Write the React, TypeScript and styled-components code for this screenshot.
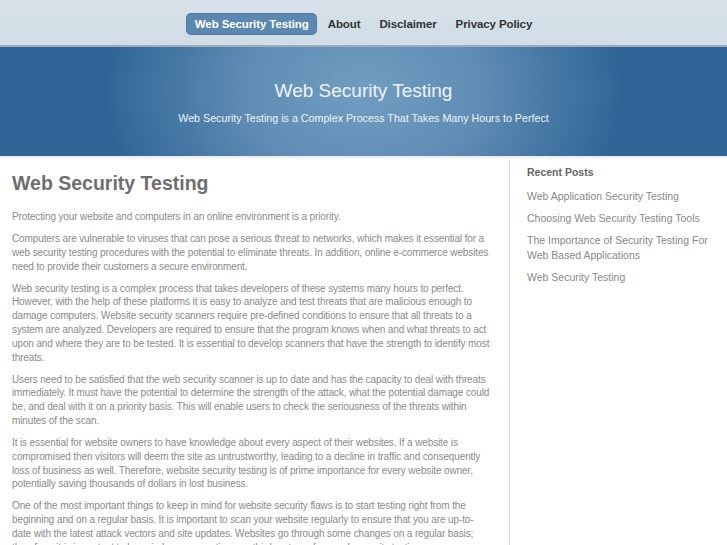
import React from "react";
import styled, { createGlobalStyle } from "styled-components";

const Global = createGlobalStyle`
  html, body { margin: 0; padding: 0; background: #ffffff; }
  body { font-family: "Liberation Sans", Arial, sans-serif; }
`;

const Page = styled.div`
  width: 727px;
  min-height: 545px;
  overflow: hidden;
`;

const NavBar = styled.nav`
  height: 45px;
  background: linear-gradient(#d7e2ea, #d1dde6);
  border-bottom: 2px solid #9eabbb;
  display: flex;
  justify-content: center;
  align-items: center;
`;

const NavList = styled.ul`
  list-style: none;
  margin: 2px 0 0 0;
  padding: 0;
  display: flex;
  align-items: center;
  gap: 4px;
`;

const NavItem = styled.li<{ $active?: boolean }>`
  font-size: 11.5px;
  font-weight: bold;
  letter-spacing: -0.1px;
  padding: 0 7.5px;
  height: 20px;
  line-height: 20px;
  border-radius: 4px;
  color: ${(p) => (p.$active ? "#ffffff" : "#333333")};
  background: ${(p) => (p.$active ? "#5b87b1" : "transparent")};
  box-shadow: ${(p) => (p.$active ? "0 0 0 1px #4f7aa3" : "none")};
`;

const Banner = styled.header`
  height: 109px;
  background:
    radial-gradient(ellipse 260px 190px at 50% 40%, rgba(114, 157, 194, 1) 0%, rgba(101, 145, 184, 0.9) 45%, rgba(47, 101, 150, 0) 100%),
    #2f6596;
  display: flex;
  flex-direction: column;
  align-items: center;
  color: #eef3f8;
`;

const BannerTitle = styled.h1`
  margin: 33px 0 0 0;
  font-size: 19px;
  font-weight: normal;
  line-height: 22px;
`;

const BannerSub = styled.p`
  margin: 9px 0 0 0;
  font-size: 10.7px;
  line-height: 14px;
`;

const Shadow = styled.div`
  height: 4px;
  background: linear-gradient(#e6e8ea, #ffffff);
`;

const Body = styled.div`
  display: flex;
`;

const Main = styled.main`
  width: 480px;
  padding: 0 17px 0 12px;
  border-right: 1px solid #d8d8d8;
`;

const Heading = styled.h2`
  margin: 11px 0 0 0;
  font-size: 19.5px;
  line-height: 24px;
  font-weight: bold;
  color: #6e6e6e;
`;

const Para = styled.p`
  margin: 8.2px 0 0 0;
  font-size: 10px;
  letter-spacing: -0.12px;
  line-height: 13.8px;
  color: #8a8a8a;
  &:first-of-type { margin-top: 15px; }
`;

const Sidebar = styled.aside`
  padding: 5px 0 0 17px;
  flex: 1;
`;

const SideTitle = styled.h3`
  margin: 0;
  font-size: 10.5px;
  line-height: 14px;
  font-weight: bold;
  color: #666666;
`;

const SideList = styled.ul`
  list-style: none;
  margin: 10px 0 0 0;
  padding: 0;
  display: flex;
  flex-direction: column;
  gap: 7.5px;
`;

const SideLink = styled.li`
  font-size: 10.5px;
  line-height: 14.5px;
  color: #888888;
  width: 190px;
`;

const paragraphs = [
  "Protecting your website and computers in an online environment is a priority.",
  "Computers are vulnerable to viruses that can pose a serious threat to networks, which makes it essential for a web security testing procedures with the potential to eliminate threats. In addition, online e-commerce websites need to provide their customers a secure environment.",
  "Web security testing is a complex process that takes developers of these systems many hours to perfect. However, with the help of these platforms it is easy to analyze and test threats that are malicious enough to damage computers. Website security scanners require pre-defined conditions to ensure that all threats to a system are analyzed. Developers are required to ensure that the program knows when and what threats to act upon and where they are to be tested. It is essential to develop scanners that have the strength to identify most threats.",
  "Users need to be satisfied that the web security scanner is up to date and has the capacity to deal with threats immediately. It must have the potential to determine the strength of the attack, what the potential damage could be, and deal with it on a priority basis. This will enable users to check the seriousness of the threats within minutes of the scan.",
  "It is essential for website owners to have knowledge about every aspect of their websites. If a website is compromised then visitors will deem the site as untrustworthy, leading to a decline in traffic and consequently loss of business as well. Therefore, website security testing is of prime importance for every website owner, potentially saving thousands of dollars in lost business.",
  "One of the most important things to keep in mind for website security flaws is to start testing right from the beginning and on a regular basis. It is important to scan your website regularly to ensure that you are up-to-date with the latest attack vectors and site updates. Websites go through some changes on a regular basis; therefore, it is important to have in-house expertise or a third party perform web security testing as soon as possible.",
];

const posts = [
  "Web Application Security Testing",
  "Choosing Web Security Testing Tools",
  "The Importance of Security Testing For Web Based Applications",
  "Web Security Testing",
];

export default function App() {
  return (
    <Page>
      <Global />
      <NavBar>
        <NavList>
          <NavItem $active>Web Security Testing</NavItem>
          <NavItem>About</NavItem>
          <NavItem>Disclaimer</NavItem>
          <NavItem>Privacy Policy</NavItem>
        </NavList>
      </NavBar>
      <Banner>
        <BannerTitle>Web Security Testing</BannerTitle>
        <BannerSub>Web Security Testing is a Complex Process That Takes Many Hours to Perfect</BannerSub>
      </Banner>
      <Shadow />
      <Body>
        <Main>
          <Heading>Web Security Testing</Heading>
          {paragraphs.map((p, i) => (
            <Para key={i}>{p}</Para>
          ))}
        </Main>
        <Sidebar>
          <SideTitle>Recent Posts</SideTitle>
          <SideList>
            {posts.map((p) => (
              <SideLink key={p}>{p}</SideLink>
            ))}
          </SideList>
        </Sidebar>
      </Body>
    </Page>
  );
}
